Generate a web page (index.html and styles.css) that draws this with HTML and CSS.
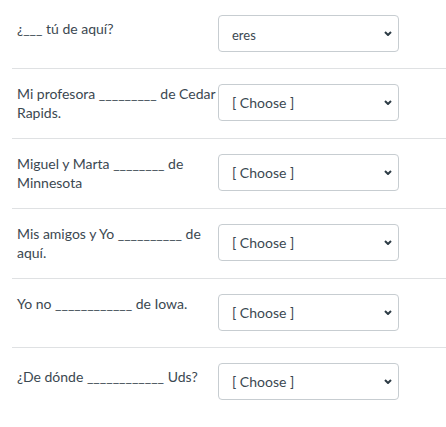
FILE: index.html
```html
<!DOCTYPE html>
<html lang="es">
<head>
<meta charset="utf-8">
<title>Quiz</title>
<link rel="stylesheet" href="styles.css">
</head>
<body>
<div class="list">
  <div class="row">
    <div class="q q-low">¿___ tú de aquí?</div>
    <div class="sel"><span class="val val-small">eres</span><svg class="chev" viewBox="0 0 8 5" width="8" height="5"><path d="M1 1 L4 4 L7 1" fill="none" stroke="#2d3b45" stroke-width="2"/></svg></div>
  </div>
  <div class="row">
    <div class="q">Mi profesora _________ de Cedar Rapids.</div>
    <div class="sel"><span class="val">[ Choose ]</span><svg class="chev" viewBox="0 0 8 5" width="8" height="5"><path d="M1 1 L4 4 L7 1" fill="none" stroke="#2d3b45" stroke-width="2"/></svg></div>
  </div>
  <div class="row">
    <div class="q">Miguel y Marta ________ de Minnesota</div>
    <div class="sel"><span class="val">[ Choose ]</span><svg class="chev" viewBox="0 0 8 5" width="8" height="5"><path d="M1 1 L4 4 L7 1" fill="none" stroke="#2d3b45" stroke-width="2"/></svg></div>
  </div>
  <div class="row">
    <div class="q">Mis amigos y Yo __________ de aquí.</div>
    <div class="sel"><span class="val">[ Choose ]</span><svg class="chev" viewBox="0 0 8 5" width="8" height="5"><path d="M1 1 L4 4 L7 1" fill="none" stroke="#2d3b45" stroke-width="2"/></svg></div>
  </div>
  <div class="row">
    <div class="q">Yo no ____________ de Iowa.</div>
    <div class="sel"><span class="val">[ Choose ]</span><svg class="chev" viewBox="0 0 8 5" width="8" height="5"><path d="M1 1 L4 4 L7 1" fill="none" stroke="#2d3b45" stroke-width="2"/></svg></div>
  </div>
  <div class="row row-last">
    <div class="q q-low">¿De dónde ____________ Uds?</div>
    <div class="sel"><span class="val">[ Choose ]</span><svg class="chev" viewBox="0 0 8 5" width="8" height="5"><path d="M1 1 L4 4 L7 1" fill="none" stroke="#2d3b45" stroke-width="2"/></svg></div>
  </div>
</div>
</body>
</html>
```

FILE: styles.css
```css
html, body {
  margin: 0;
  padding: 0;
  background: #ffffff;
}
body {
  font-family: Lato, "Open Sans", "Liberation Sans", sans-serif;
  color: #3b4851;
}
.list {
  margin-left: 12px;
}
.row {
  display: flex;
  align-items: flex-start;
  padding: 15px 0 16px 5px;
  border-bottom: 1px solid #dfe1e3;
}
.row-last {
  border-bottom: none;
}
.q {
  width: 201px;
  font-size: 14px;
  line-height: 19px;
  padding-top: 0;
}
.q-low {
  padding-top: 4px;
}
.sel {
  box-sizing: border-box;
  width: 181px;
  height: 37px;
  border: 1px solid #c7cdd1;
  border-radius: 4px;
  display: flex;
  align-items: center;
  justify-content: space-between;
  padding: 0 6px 0 13px;
}
.val {
  font-size: 14px;
  color: #3b4851;
}
.val-small {
  font-size: 13px;
  padding-top: 2px;
}
.chev {
  display: block;
}
```
